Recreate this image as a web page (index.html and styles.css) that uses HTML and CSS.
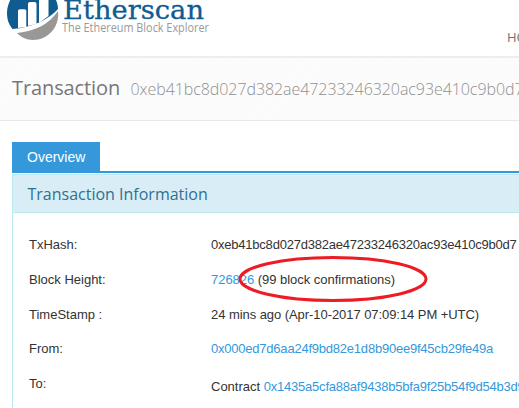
FILE: index.html
```html
<!DOCTYPE html>
<html lang="en">
<head>
<meta charset="utf-8">
<title>Etherscan Transaction</title>
<link rel="stylesheet" href="styles.css">
</head>
<body>
<header class="header">
  <svg class="logo" width="215" height="45" viewBox="0 0 215 45">
    <path class="logo-blue" d="M12.500 29C8.500 24 7 19 7 13C7 7 9 3 11 -2H55C57 2 58 5 58 9C49 19 32 28 12.500 29Z"/>
    <path class="logo-white" d="M18 28V11Q18 9.300 20 9.300H24.500Q26.300 9.300 26.300 11V27Z"/>
    <path class="logo-white" d="M28 26V4Q28 2 30 2H34.500Q36.500 2 36.500 4V24Z"/>
    <path class="logo-white" d="M39 23V-2H48.500V16Z"/>
    <path class="logo-grey" d="M17 33C36 31 49 24 58 11C60 27 48 40 33 40C26 40 21 37 17 33Z"/>
    <text class="logo-name" x="63" y="18.500" textLength="141" lengthAdjust="spacingAndGlyphs">Etherscan</text>
    <text class="logo-tag" x="62" y="32" textLength="147" lengthAdjust="spacingAndGlyphs">The Ethereum Block Explorer</text>
  </svg>
  <nav class="nav">HOME</nav>
</header>
<section class="breadcrumbs">
  <h1 class="title">Transaction</h1>
  <span class="title-hash">0xeb41bc8d027d382ae47233246320ac93e410c9b0d7</span>
</section>
<main class="content">
  <div class="tabs"><a class="tab">Overview</a></div>
  <section class="panel">
    <h2 class="panel-heading">Transaction Information</h2>
    <dl class="rows">
      <dt>TxHash:</dt><dd class="hash">0xeb41bc8d027d382ae47233246320ac93e410c9b0d7</dd>
      <dt>Block Height:</dt><dd class="block"><a>726826</a> (99 block confirmations)
        <svg class="mark" width="192" height="50" viewBox="0 0 192 50"><ellipse cx="96" cy="25" rx="93" ry="21.500"/></svg></dd>
      <dt>TimeStamp :</dt><dd class="time">24 mins ago (Apr-10-2017 07:09:14 PM +UTC)</dd>
      <dt>From:</dt><dd><a class="hash">0x000ed7d6aa24f9bd82e1d8b90ee9f45cb29fe49a</a></dd>
      <dt>To:</dt><dd class="to">Contract <a class="hash">0x1435a5cfa88af9438b5bfa9f25b54f9d54b3d9</a></dd>
    </dl>
  </section>
</main>
</body>
</html>
```

FILE: styles.css
```css
* { box-sizing: border-box; }
body {
  margin: 0;
  height: 408px;
  overflow: hidden;
  background: #fff;
  color: #333;
  font: 13px/20px "Liberation Sans", Arial, sans-serif;
  white-space: nowrap;
}
.header {
  display: flex;
  height: 58px;
  border-bottom: 2px solid #eee;
  overflow: hidden;
}
.logo { flex: none; }
.logo-blue { fill: #105b8f; }
.logo-white { fill: #fff; }
.logo-grey { fill: #999896; }
.logo-name { font: 26px "DejaVu Serif", serif; fill: #105b8f; stroke: #105b8f; stroke-width: .3px; }
.logo-tag { font: 12px "Open Sans", sans-serif; fill: #999; }
.nav {
  margin: 27px 0 0 292px;
  font: 13px/20px "Open Sans", sans-serif;
  color: #687074;
}
.breadcrumbs {
  display: flex;
  align-items: baseline;
  height: 63px;
  padding: 15px 0 0 12px;
  border-bottom: 1px solid #e8e8e8;
  background: repeating-linear-gradient(135deg, #fcfcfc 0 2px, #fafafa 2px 3px);
  overflow: hidden;
}
.title {
  flex: none;
  width: 118.5px;
  margin: 0;
  font: 400 20px/30px "Open Sans", sans-serif;
  letter-spacing: -.1px;
  color: #777;
}
.title-hash {
  font: 300 16px/30px "Open Sans", sans-serif;
  letter-spacing: -.07px;
  color: #909090;
}
.content { padding: 21px 0 0 12px; }
.tabs { display: flex; height: 31px; border-bottom: 2px solid #3498db; }
.tab {
  width: 88px;
  height: 30px;
  padding: 5px 15px;
  background: #3498db;
  color: #fff;
  font-size: 14px;
}
.panel {
  width: 560px;
  height: 260px;
  margin-top: 1px;
  border: 1px solid #bce8f1;
}
.panel-heading {
  height: 38px;
  margin: 0;
  padding: 7px 14.5px;
  border-bottom: 1px solid #bce8f1;
  background: #d9edf7;
  color: #31708f;
  font: 400 16px/24px "Open Sans", sans-serif;
}
.rows {
  display: grid;
  grid-template-columns: 182px 1fr;
  grid-template-rows: 35px 35px 34px 35px 35px;
  margin: 0;
  padding: 22px 0 0 16px;
}
dt, dd { margin: 0; }
a { color: #3498db; }
.tabs .tab { color: #fff; }
.hash { letter-spacing: -.22px; }
.time { letter-spacing: -.06px; }
.block { position: relative; letter-spacing: -.03px; }
.to { padding-top: 3px; }
.mark { position: absolute; left: 26px; top: -16px; }
.mark ellipse { fill: none; stroke: #ed1c24; stroke-width: 3px; }
```
